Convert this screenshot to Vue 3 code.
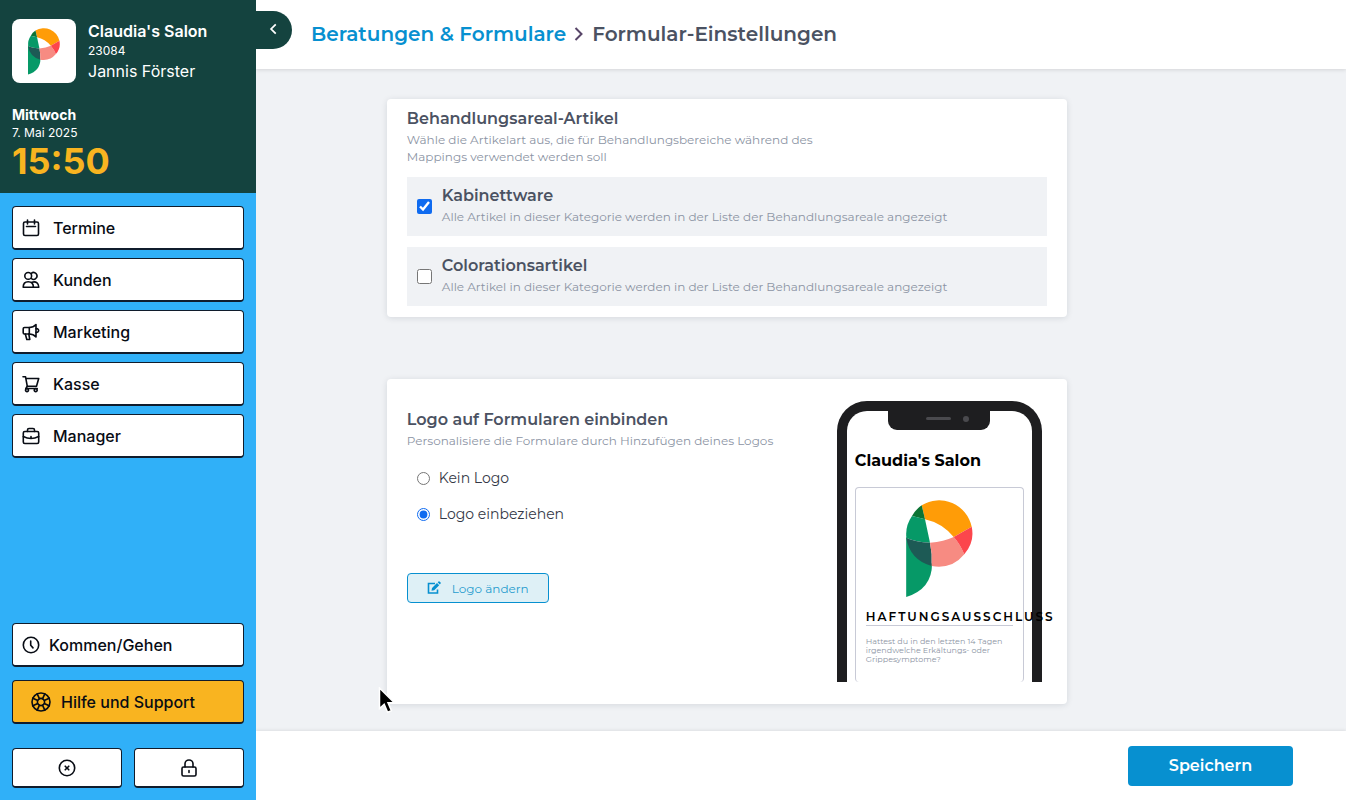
<template>
  <div class="layout">
    <aside class="sidebar">
      <div class="profile">
        <div class="account">
          <div class="avatar">
            <svg class="brand-small" viewBox="0 0 67 98" aria-hidden="true">
              <path v-for="part in logoParts" :key="part.d" :d="part.d" :fill="part.fill" />
            </svg>
          </div>
          <div class="account-text">
            <strong class="salon">{{ salon }}</strong>
            <span class="number">23084</span>
            <span class="user">Jannis Förster</span>
          </div>
        </div>
        <div class="date">
          <strong class="weekday">Mittwoch</strong>
          <span class="day">7. Mai 2025</span>
          <span class="clock">15:50</span>
        </div>
      </div>

      <nav class="menu">
        <button v-for="item in menu" :key="item.label" type="button" class="side-button">
          <svg class="icon" viewBox="0 0 18 18" aria-hidden="true">
            <path v-for="d in item.paths" :key="d" :d="d" />
          </svg>
          <span>{{ item.label }}</span>
        </button>
      </nav>

      <div class="side-bottom">
        <button type="button" class="side-button clock-button">
          <svg class="icon" viewBox="0 0 18 18" aria-hidden="true">
            <circle cx="9" cy="9" r="7.7" />
            <path d="M8.7 5v4.3l2.3 2.6" />
          </svg>
          <span>Kommen/Gehen</span>
        </button>
        <button type="button" class="side-button support">
          <svg class="icon support-icon" viewBox="0 0 20 20" aria-hidden="true">
            <circle cx="10" cy="10" r="9" />
            <circle cx="10" cy="10" r="3.6" />
            <path d="M13.200 11.500l5 2.300M11.500 13.200l2.300 5M8.500 13.200l-2.300 5M6.800 11.500l-5 2.300M6.800 8.500l-5-2.300M8.500 6.800l-2.300-5M11.500 6.800l2.300-5M13.200 8.500l5-2.300" />
          </svg>
          <span>Hilfe und Support</span>
        </button>
        <div class="side-pair">
          <button type="button" class="side-button small" aria-label="Abmelden">
            <svg class="icon" viewBox="0 0 18 18" aria-hidden="true">
              <circle cx="9" cy="9" r="7.7" />
              <path d="M7.200 7.200l3.600 3.600M10.800 7.200l-3.600 3.600" />
            </svg>
          </button>
          <button type="button" class="side-button small" aria-label="Sperren">
            <svg class="icon" viewBox="0 0 18 18" aria-hidden="true">
              <rect x="2" y="8" width="14" height="9" rx="1.6" />
              <path d="M5 8V5a4 4 0 0 1 8 0v3M9 11.500v2" />
            </svg>
          </button>
        </div>
      </div>

      <button type="button" class="collapse" aria-label="Menü einklappen">
        <svg class="collapse-icon" viewBox="0 0 12 12" aria-hidden="true">
          <path d="M7.500 2L3.500 6l4 4" />
        </svg>
      </button>
    </aside>

    <div class="page">
      <header class="topbar">
        <a href="#" class="crumb-link">Beratungen &amp; Formulare</a>
        <svg class="crumb-arrow" viewBox="0 0 10 16" aria-hidden="true">
          <path d="M1.500 2L7.500 8l-6 6" />
        </svg>
        <h1 class="crumb-current">Formular-Einstellungen</h1>
      </header>

      <main class="content">
        <section class="card">
          <h2 class="title">Behandlungsareal-Artikel</h2>
          <p class="hint intro">
            Wähle die Artikelart aus, die für Behandlungsbereiche während des<br>Mappings verwendet werden soll
          </p>
          <label v-for="option in articles" :key="option.label" class="option">
            <input v-model="option.checked" type="checkbox" class="checkbox">
            <span class="option-text">
              <span class="title">{{ option.label }}</span>
              <span class="hint">Alle Artikel in dieser Kategorie werden in der Liste der Behandlungsareale angezeigt</span>
            </span>
          </label>
        </section>

        <section class="card logo-card">
          <div class="logo-settings">
            <h2 class="title">Logo auf Formularen einbinden</h2>
            <p class="hint">Personalisiere die Formulare durch Hinzufügen deines Logos</p>
            <div class="radios">
              <label class="radio-label">
                <input v-model="logoMode" type="radio" name="logo" value="none" class="radio">
                <span>Kein Logo</span>
              </label>
              <label class="radio-label">
                <input v-model="logoMode" type="radio" name="logo" value="include" class="radio">
                <span>Logo einbeziehen</span>
              </label>
            </div>
            <button type="button" class="change-logo">
              <svg class="edit-icon" viewBox="0 0 14 14" aria-hidden="true">
                <path class="edit-box" d="M8 2.500H1.500v9.500h9V8.500" />
                <path class="edit-pen" d="M4.500 9.800l.5-2.800L10 2l2.200 2.200-5 5zM10.700 1.300l.8-.8q.5-.5 1 0l1.100 1.100q.5.5 0 1l-.8.8z" />
              </svg>
              <span>Logo ändern</span>
            </button>
          </div>

          <div class="phone">
            <div class="notch">
              <span class="speaker"></span>
              <span class="camera"></span>
            </div>
            <h3 class="phone-title">{{ salon }}</h3>
            <div class="form-preview">
              <svg v-if="logoMode === 'include'" class="brand-large" viewBox="0 0 67 98" aria-hidden="true">
                <path v-for="part in logoParts" :key="part.d" :d="part.d" :fill="part.fill" />
              </svg>
              <h4 class="disclaimer">HAFTUNGSAUSSCHLUSS</h4>
              <p class="question">Hattest du in den letzten 14 Tagen irgendwelche Erkältungs- oder Grippesymptome?</p>
            </div>
          </div>
        </section>
      </main>

      <footer class="footer">
        <button type="button" class="save">Speichern</button>
      </footer>
    </div>

    <svg class="pointer" viewBox="0 0 18 27" aria-hidden="true">
      <path d="M1.500 1v20.500l4.700-4.300 3.400 8 3.800-1.600-3.400-7.800h6.300z" />
    </svg>
  </div>
</template>

<script setup>
  import { ref } from 'vue';

  const salon = "Claudia's Salon";
  const logoMode = ref('include');

  const articles = ref([
    { label: 'Kabinettware', checked: true },
    { label: 'Colorationsartikel', checked: false },
  ]);

  const menu = [
    {
      label: 'Termine',
      paths: ['M3 3h12q1.500 0 1.500 1.500v10.500q0 1.500-1.500 1.500H3q-1.500 0-1.500-1.500V4.500Q1.500 3 3 3z', 'M5.500 1v4M12.500 1v4M4.500 7.500h9'],
    },
    {
      label: 'Kunden',
      paths: [
        'M6.200 1.500a3.400 3.400 0 1 0 0 6.800a3.400 3.400 0 1 0 0-6.800z',
        'M9.300 2.300a3.400 3.400 0 1 1 0 5.200',
        'M1.200 16.300c0-3.500 1.700-5.600 5-5.600s5.200 2.100 5.200 5.600z',
        'M10 11.200c4.300-1.300 6.800 1.200 6.800 5.100h-5.400',
      ],
    },
    {
      label: 'Marketing',
      paths: [
        'M2.500 4.500h4.800v6.500H2.500q-1.300 0-1.300-1.300V5.800q0-1.300 1.300-1.300z',
        'M7.300 4.500c2.600 0 4.900-1 6.700-3v12.500c-1.800-2-4.100-3-6.700-3',
        'M14 5.700c3.500-.5 3.500 4.100 0 3.700M3.300 11l1.500 5.500h3l-1-5.500',
      ],
    },
    {
      label: 'Kasse',
      paths: [
        'M1 1.700h2.500l1.800 9.600h9.200l2.200-7.800H4',
        'M5.300 11.300l-1.500 2.200h11.400',
        'M5 13.600a1.500 1.500 0 1 0 0 3a1.500 1.500 0 1 0 0-3zM13.700 13.600a1.500 1.500 0 1 0 0 3a1.500 1.500 0 1 0 0-3z',
      ],
    },
    {
      label: 'Manager',
      paths: [
        'M2.800 4.500h12.400q1.500 0 1.500 1.500v9q0 1.500-1.500 1.500H2.800q-1.500 0-1.500-1.500V6q0-1.500 1.500-1.500z',
        'M5.500 4.500V3q0-1.500 1.500-1.500h4q1.500 0 1.500 1.500v1.500',
        'M1.300 9.500q7.700 4 15.400 0M9 9.500v1.700',
      ],
    },
  ];

  const logoParts = [
    { fill: '#ff9c07', d: 'M15.700 5.300A33.300 33.300 0 0 1 65.700 26.700L47.700 37Q36 23 19 19.300Z' },
    { fill: '#0b7334', d: 'M15.700 5.300L19 19.300L6 16Q10 9 15.700 5.300Z' },
    { fill: '#069967', d: 'M6 16Q12 17.300 19 19.300L24 42.700Q10 42 .4 38Q-1 26 6 16Z' },
    { fill: '#069967', d: 'M.2 37L.2 97Q26 89 26 64Z' },
    { fill: '#1d5a55', d: 'M.3 38Q10 42 24 42.700Q26.500 54 25.700 66Q4 60 .3 38Z' },
    { fill: '#f78b82', d: 'M24 42.700Q38 41.500 47.700 37Q54 44 58.300 54.300Q46 69.500 25.700 66Q26.500 54 24 42.700Z' },
    { fill: '#fc464c', d: 'M65.700 26.700Q69 42 58.300 54.300Q54 44 47.700 37Z' },
  ];
</script>

<style>
body {
  margin: 0;
}
</style>

<style scoped>
* {
  box-sizing: border-box;
}

h1, h2, h3, h4, p {
  margin: 0;
}

button {
  font-family: inherit;
  cursor: pointer;
}

.layout {
  position: relative;
  display: flex;
  min-height: 100vh;
  font-family: Inter, sans-serif;
  background: #f0f2f5;
}

.sidebar {
  position: relative;
  display: flex;
  flex-direction: column;
  flex: 0 0 256px;
  background: #30b0f8;
}

.profile {
  padding: 19px 12px 12px;
  background: #14433f;
  color: #fff;
}

.account {
  display: flex;
  gap: 12px;
}

.avatar {
  display: flex;
  align-items: center;
  justify-content: center;
  width: 64px;
  height: 64px;
  border-radius: 8px;
  background: #fff;
}

.brand-small {
  width: 34px;
  height: 47px;
}

.account-text,
.date {
  display: flex;
  flex-direction: column;
}

.salon {
  font-size: 16px;
  font-weight: 600;
  line-height: 24px;
}

.number,
.day {
  font-size: 12px;
  line-height: 16px;
}

.user {
  font-size: 16px;
  line-height: 24px;
}

.date {
  margin-top: 22px;
}

.weekday {
  font-size: 14px;
  line-height: 20px;
}

.clock {
  font-size: 36px;
  font-weight: 700;
  line-height: 40px;
  color: #f8b420;
}

.menu {
  display: flex;
  flex-direction: column;
  gap: 8px;
  padding: 13px 12px 12px;
}

.side-button {
  display: flex;
  align-items: center;
  gap: 13px;
  height: 44px;
  padding: 0 9px;
  border: 1px solid #101c2c;
  border-bottom-width: 2px;
  border-radius: 4px;
  background: #fff;
  color: #080c14;
  font-size: 16px;
  font-weight: 500;
}

.icon {
  flex: none;
  width: 18px;
  height: 18px;
  fill: none;
  stroke: currentColor;
  stroke-width: 1.6;
  stroke-linecap: round;
  stroke-linejoin: round;
}

.side-bottom {
  display: flex;
  flex-direction: column;
  gap: 13px;
  margin-top: auto;
  padding: 12px;
}

.clock-button {
  gap: 9px;
}

.support {
  gap: 10px;
  padding: 0 18px;
  background: #f9b420;
}

.support-icon {
  width: 20px;
  height: 20px;
}

.side-pair {
  display: flex;
  gap: 12px;
  margin-top: 11px;
}

.small {
  flex: 1;
  justify-content: center;
  height: 40px;
}

.collapse {
  position: absolute;
  top: 11px;
  left: 100%;
  width: 36px;
  height: 38px;
  padding: 0;
  border: none;
  border-radius: 0 19px 19px 0;
  background: #14433f;
}

.collapse-icon {
  width: 14px;
  height: 14px;
  fill: none;
  stroke: #fff;
  stroke-width: 1.5;
}

.page {
  display: flex;
  flex: 1;
  flex-direction: column;
  min-width: 0;
  font-family: Montserrat, Inter, sans-serif;
}

.topbar {
  display: flex;
  align-items: center;
  gap: 8px;
  height: 69px;
  padding: 0 24px 2px 55px;
  background: #fff;
  box-shadow: 0 1px 4px rgba(0, 0, 0, 0.12);
}

.crumb-link,
.crumb-current {
  font-size: 20px;
  font-weight: 600;
  line-height: 28px;
}

.crumb-link {
  color: #0790d0;
  text-decoration: none;
}

.crumb-current {
  color: #4b5262;
}

.crumb-arrow {
  width: 10px;
  height: 16px;
  fill: none;
  stroke: #574568;
  stroke-width: 2;
}

.content {
  display: flex;
  flex: 1;
  flex-direction: column;
  gap: 62px;
  padding: 30px 24px 26px 12%;
}

.card {
  max-width: 680px;
  padding: 8px 20px 11px;
  border-radius: 4px;
  background: #fff;
  box-shadow: 0 1px 6px rgba(20, 30, 50, 0.12);
}

.title {
  font-size: 16px;
  font-weight: 600;
  line-height: 24px;
  color: #4b5262;
}

.hint {
  font-size: 12px;
  line-height: 17px;
  color: #8c94a4;
}

.intro {
  margin-bottom: 12px;
}

.option {
  display: flex;
  align-items: center;
  gap: 10px;
  height: 59px;
  padding: 0 10px;
  background: #f0f2f5;
}

.option + .option {
  margin-top: 11px;
}

.option-text {
  display: flex;
  flex-direction: column;
  padding-bottom: 4px;
}

.checkbox,
.radio {
  flex: none;
  margin: 0;
  accent-color: #0f6bf0;
}

.checkbox {
  width: 15px;
  height: 15px;
}

.radio {
  width: 13px;
  height: 13px;
}

.logo-card {
  display: flex;
  justify-content: space-between;
  padding: 22px 25px 22px 20px;
}

.logo-settings {
  padding-top: 7px;
}

.radios {
  display: flex;
  flex-direction: column;
  gap: 12px;
  padding: 17px 10px 0;
}

.radio-label {
  display: flex;
  align-items: center;
  gap: 9px;
  font-size: 14px;
  line-height: 24px;
  color: #343846;
}

.change-logo {
  display: flex;
  align-items: center;
  gap: 11px;
  height: 30px;
  margin-top: 47px;
  padding: 0 19px;
  border: 1px solid #0790d0;
  border-radius: 4px;
  background: #def0f6;
  color: #289cce;
  font-size: 12px;
}

.edit-icon {
  width: 14px;
  height: 14px;
}

.edit-box {
  fill: none;
  stroke: #0790d0;
  stroke-width: 1.6;
}

.edit-pen {
  fill: #0790d0;
}

.phone {
  flex: 0 0 205px;
  min-width: 0;
  height: 281px;
  padding: 0 8px;
  border: 10px solid #1e1e20;
  border-bottom: 0;
  border-radius: 30px 30px 0 0;
  color: #000;
}

.notch {
  display: flex;
  align-items: center;
  justify-content: flex-end;
  gap: 12px;
  width: 102px;
  height: 19px;
  margin: 0 auto;
  padding: 0 21px 4px;
  border-radius: 0 0 9px 9px;
  background: #1e1e20;
}

.speaker {
  width: 25px;
  height: 3px;
  border-radius: 2px;
  background: #4a4a4e;
}

.camera {
  width: 6px;
  height: 6px;
  border-radius: 50%;
  background: #4a4a4e;
}

.phone-title {
  margin-top: 19px;
  font-size: 16px;
  font-weight: 700;
  line-height: 24px;
}

.form-preview {
  height: 195px;
  margin-top: 14px;
  padding: 12px 10px 0;
  border: 1px solid #c8cad6;
  border-bottom: 0;
  border-radius: 4px;
}

.brand-large {
  display: block;
  width: 67px;
  height: 98px;
  margin: 0 auto;
}

.disclaimer {
  margin-top: 10px;
  border-bottom: 1px solid #c8cad6;
  font-size: 12px;
  font-weight: 600;
  line-height: 17px;
  letter-spacing: 2px;
  white-space: nowrap;
}

.question {
  margin-top: 11px;
  font-size: 8px;
  line-height: 9px;
  color: #8c94a4;
}

.footer {
  display: flex;
  align-items: center;
  justify-content: flex-end;
  height: 69px;
  padding-right: 53px;
  background: #fff;
  box-shadow: 0 -1px 3px rgba(0, 0, 0, 0.08);
}

.save {
  width: 165px;
  height: 40px;
  border: none;
  border-radius: 4px;
  background: #0790d0;
  color: #fff;
  font-size: 16px;
  font-weight: 600;
}

.pointer {
  position: absolute;
  top: 687px;
  left: 378px;
  width: 18px;
  height: 27px;
  fill: #000;
  stroke: #fff;
  stroke-width: 1.5;
  pointer-events: none;
}
</style>
